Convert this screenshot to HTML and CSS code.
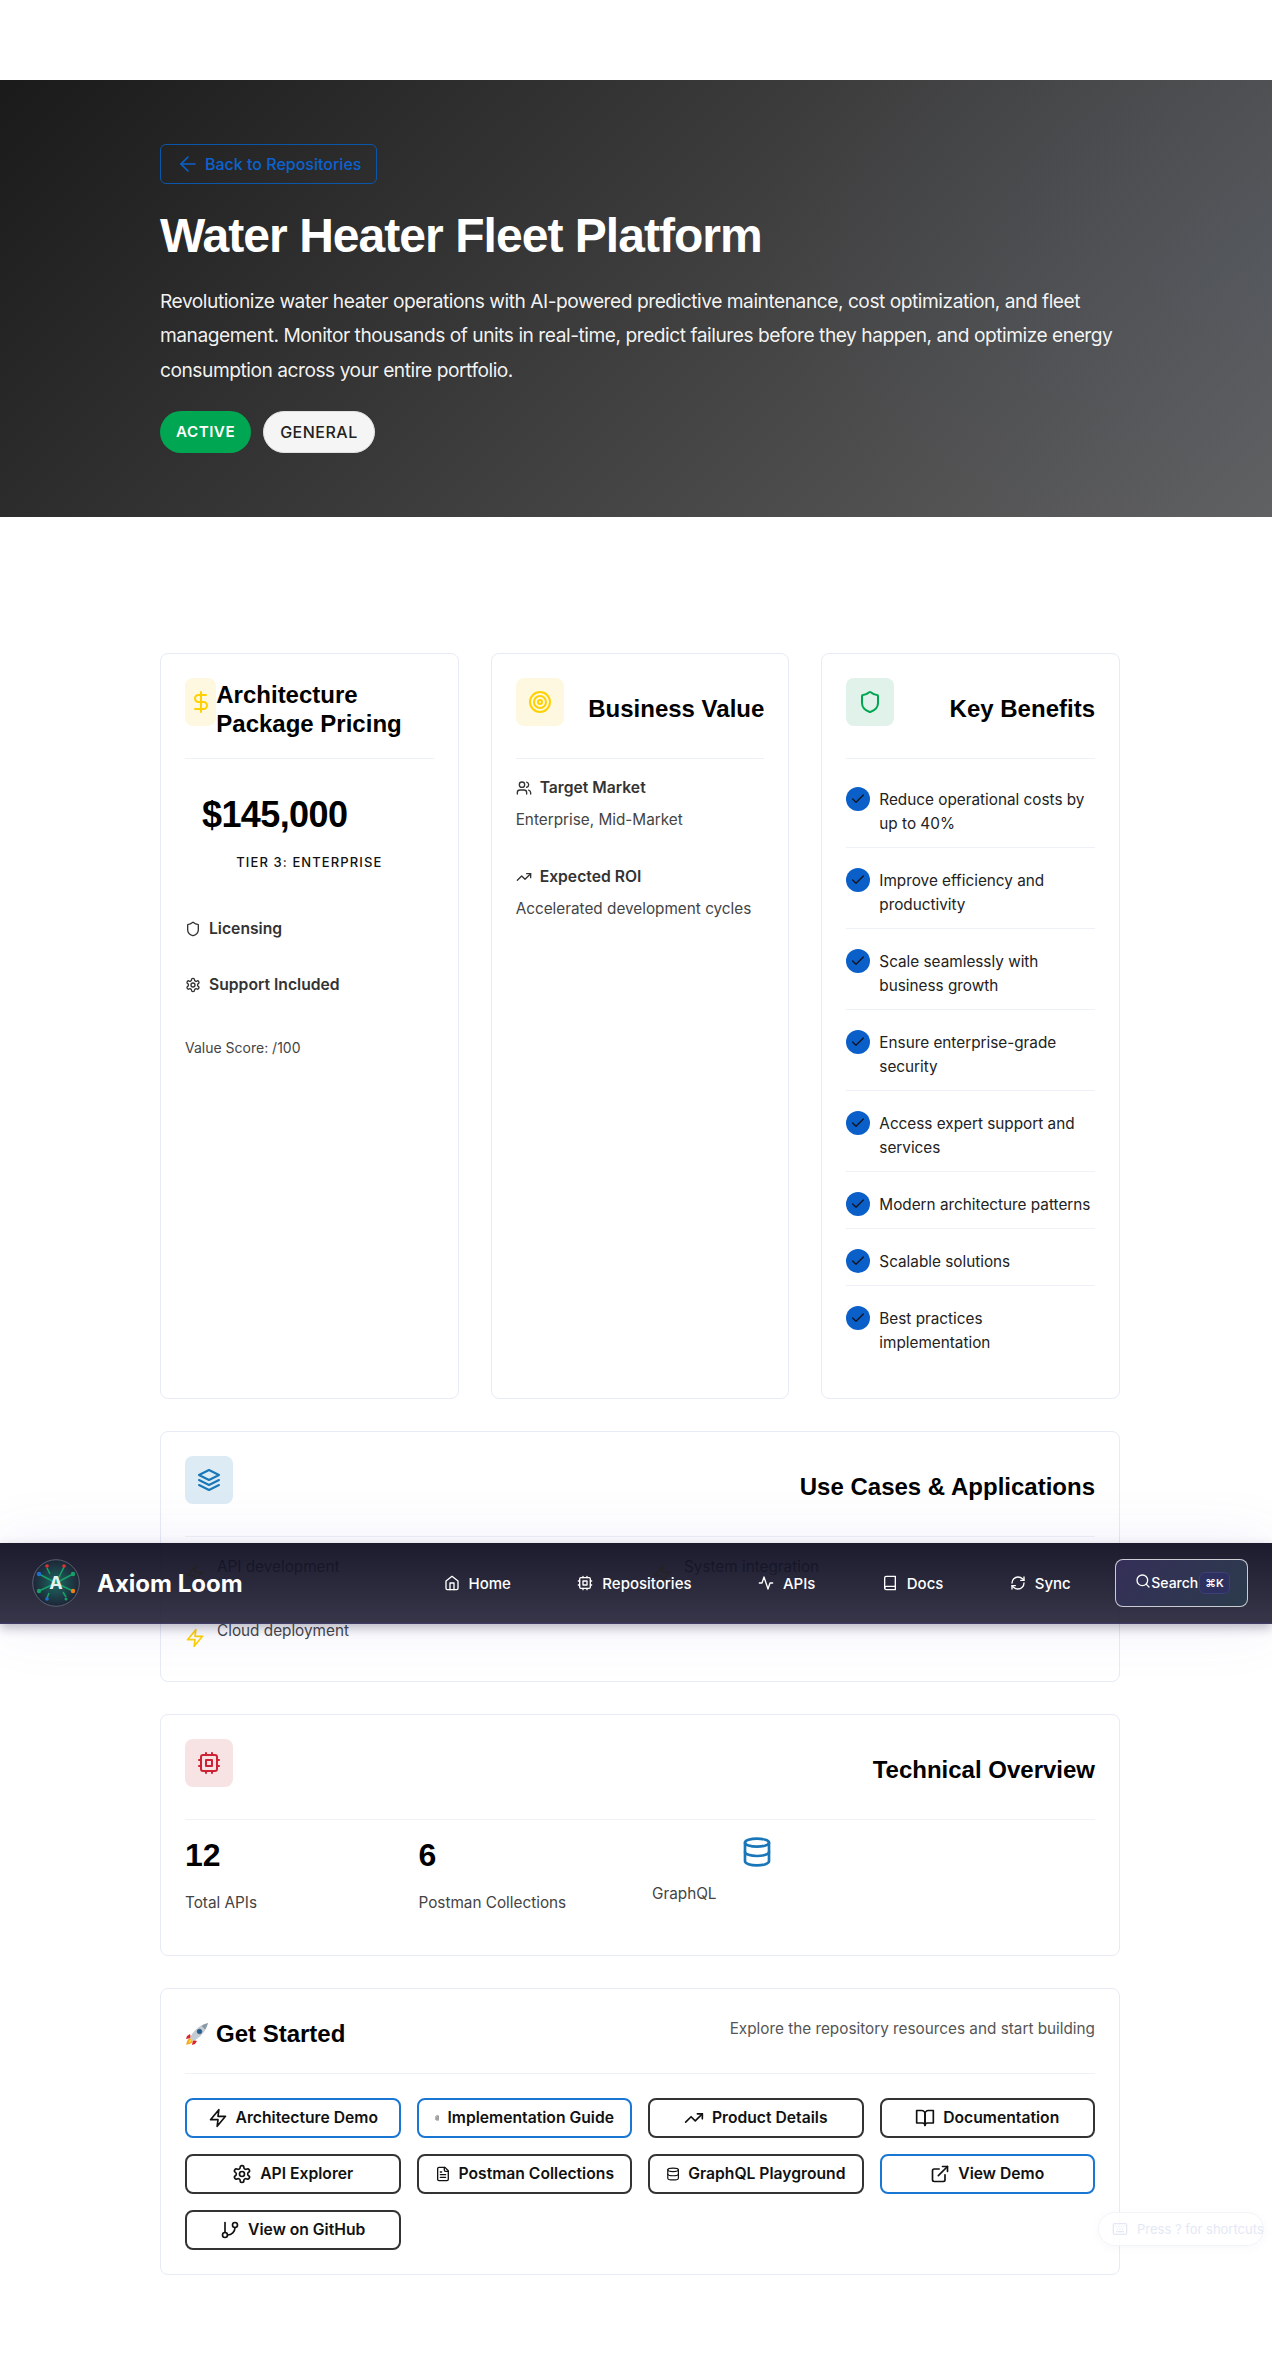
FILE: index.html
```html
<!DOCTYPE html>
<html lang="en">
<head>
  <meta charset="UTF-8" />
  <meta name="viewport" content="width=device-width, initial-scale=1.0"/>
  <title>Water Heater Fleet Platform</title>
  <link rel="stylesheet" href="styles.css">
</head>
<body>
  <svg class="sprite" aria-hidden="true">
    <symbol id="i-arrow-left" viewBox="0 0 24 24"><path d="m12 19-7-7 7-7"/><path d="M19 12H5"/></symbol>
    <symbol id="i-dollar" viewBox="0 0 24 24"><path d="M12 2v20"/><path d="M17 5H9.5a3.5 3.5 0 0 0 0 7h5a3.5 3.5 0 0 1 0 7H6"/></symbol>
    <symbol id="i-target" viewBox="0 0 24 24"><circle cx="12" cy="12" r="10"/><circle cx="12" cy="12" r="6"/><circle cx="12" cy="12" r="2"/></symbol>
    <symbol id="i-shield" viewBox="0 0 24 24"><path d="M20 13c0 5-3.5 7.5-7.66 8.95a1 1 0 0 1-.67-.01C7.5 20.5 4 18 4 13V6a1 1 0 0 1 1-1c2 0 4.5-1.2 6.24-2.72a1.17 1.17 0 0 1 1.52 0C14.51 3.81 17 5 19 5a1 1 0 0 1 1 1z"/></symbol>
    <symbol id="i-settings" viewBox="0 0 24 24"><path d="M12.22 2h-.44a2 2 0 0 0-2 2v.18a2 2 0 0 1-1 1.73l-.43.25a2 2 0 0 1-2 0l-.15-.08a2 2 0 0 0-2.73.73l-.22.38a2 2 0 0 0 .73 2.73l.15.1a2 2 0 0 1 1 1.72v.51a2 2 0 0 1-1 1.74l-.15.09a2 2 0 0 0-.73 2.73l.22.38a2 2 0 0 0 2.73.73l.15-.08a2 2 0 0 1 2 0l.43.25a2 2 0 0 1 1 1.73V20a2 2 0 0 0 2 2h.44a2 2 0 0 0 2-2v-.18a2 2 0 0 1 1-1.73l.43-.25a2 2 0 0 1 2 0l.15.08a2 2 0 0 0 2.73-.73l.22-.39a2 2 0 0 0-.73-2.73l-.15-.08a2 2 0 0 1-1-1.74v-.5a2 2 0 0 1 1-1.74l.15-.09a2 2 0 0 0 .73-2.73l-.22-.38a2 2 0 0 0-2.73-.73l-.15.08a2 2 0 0 1-2 0l-.43-.25a2 2 0 0 1-1-1.73V4a2 2 0 0 0-2-2z"/><circle cx="12" cy="12" r="3"/></symbol>
    <symbol id="i-users" viewBox="0 0 24 24"><path d="M16 21v-2a4 4 0 0 0-4-4H6a4 4 0 0 0-4 4v2"/><circle cx="9" cy="7" r="4"/><path d="M22 21v-2a4 4 0 0 0-3-3.87"/><path d="M16 3.13a4 4 0 0 1 0 7.75"/></symbol>
    <symbol id="i-trending" viewBox="0 0 24 24"><polyline points="22 7 13.5 15.5 8.5 10.5 2 17"/><polyline points="16 7 22 7 22 13"/></symbol>
    <symbol id="i-check" viewBox="0 0 24 24"><path d="M20 6 9 17l-5-5"/></symbol>
    <symbol id="i-layers" viewBox="0 0 24 24"><path d="M12 2 2 7l10 5 10-5-10-5z"/><path d="m2 17 10 5 10-5"/><path d="m2 12 10 5 10-5"/></symbol>
    <symbol id="i-zap" viewBox="0 0 24 24"><polygon points="13 2 3 14 12 14 11 22 21 10 12 10 13 2"/></symbol>
    <symbol id="i-cpu" viewBox="0 0 24 24"><rect x="4" y="4" width="16" height="16" rx="2"/><rect x="9" y="9" width="6" height="6"/><path d="M15 2v2M15 20v2M2 15h2M2 9h2M20 15h2M20 9h2M9 2v2M9 20v2"/></symbol>
    <symbol id="i-database" viewBox="0 0 24 24"><ellipse cx="12" cy="5" rx="9" ry="3"/><path d="M3 5V19A9 3 0 0 0 21 19V5"/><path d="M3 12A9 3 0 0 0 21 12"/></symbol>
    <symbol id="i-file" viewBox="0 0 24 24"><path d="M15 2H6a2 2 0 0 0-2 2v16a2 2 0 0 0 2 2h12a2 2 0 0 0 2-2V7Z"/><path d="M14 2v4a2 2 0 0 0 2 2h4"/><path d="M10 9H8M16 13H8M16 17H8"/></symbol>
    <symbol id="i-book-open" viewBox="0 0 24 24"><path d="M2 3h6a4 4 0 0 1 4 4v14a3 3 0 0 0-3-3H2z"/><path d="M22 3h-6a4 4 0 0 0-4 4v14a3 3 0 0 1 3-3h7z"/></symbol>
    <symbol id="i-external" viewBox="0 0 24 24"><path d="M15 3h6v6"/><path d="M10 14 21 3"/><path d="M18 13v6a2 2 0 0 1-2 2H5a2 2 0 0 1-2-2V8a2 2 0 0 1 2-2h6"/></symbol>
    <symbol id="i-branch" viewBox="0 0 24 24"><path d="M6 3v12"/><circle cx="18" cy="6" r="3"/><circle cx="6" cy="18" r="3"/><path d="M18 9a9 9 0 0 1-9 9"/></symbol>
    <symbol id="i-home" viewBox="0 0 24 24"><path d="m3 9 9-7 9 7v11a2 2 0 0 1-2 2H5a2 2 0 0 1-2-2z"/><polyline points="9 22 9 12 15 12 15 22"/></symbol>
    <symbol id="i-activity" viewBox="0 0 24 24"><polyline points="22 12 18 12 15 21 9 3 6 12 2 12"/></symbol>
    <symbol id="i-book" viewBox="0 0 24 24"><path d="M4 19.5A2.5 2.5 0 0 1 6.5 17H20"/><path d="M6.5 2H20v20H6.5A2.5 2.5 0 0 1 4 19.5v-15A2.5 2.5 0 0 1 6.5 2z"/></symbol>
    <symbol id="i-sync" viewBox="0 0 24 24"><path d="M3 12a9 9 0 0 1 9-9 9.75 9.75 0 0 1 6.74 2.74L21 8"/><path d="M21 3v5h-5"/><path d="M21 12a9 9 0 0 1-9 9 9.75 9.75 0 0 1-6.74-2.74L3 16"/><path d="M8 16H3v5"/></symbol>
    <symbol id="i-search" viewBox="0 0 24 24"><circle cx="11" cy="11" r="8"/><path d="m21 21-4.3-4.3"/></symbol>
    <symbol id="i-keyboard" viewBox="0 0 24 24"><rect x="2" y="4" width="20" height="16" rx="2"/><path d="M6 8h.01M10 8h.01M14 8h.01M18 8h.01M8 12h.01M12 12h.01M16 12h.01M7 16h10"/></symbol>
  </svg>

  <section class="hero">
    <div class="hero-inner">
      <a class="back-link" href="#"><svg class="icon icon-24"><use href="#i-arrow-left"/></svg>Back to Repositories</a>
      <h1>Water Heater Fleet Platform</h1>
      <p class="hero-text">Revolutionize water heater operations with AI-powered predictive maintenance, cost optimization, and fleet management. Monitor thousands of units in real-time, predict failures before they happen, and optimize energy consumption across your entire portfolio.</p>
      <div class="badges">
        <span class="badge badge-active">ACTIVE</span>
        <span class="badge badge-general">GENERAL</span>
      </div>
    </div>
  </section>

  <main class="container">
    <div class="three-cols">
      <div class="card">
        <div class="card-header">
          <div class="card-icon yellow"><svg class="icon icon-24"><use href="#i-dollar"/></svg></div>
          <h3>Architecture Package Pricing</h3>
        </div>
        <div class="price">$145,000</div>
        <div class="tier">TIER 3: ENTERPRISE</div>
        <div class="label-row licensing"><svg class="icon icon-16"><use href="#i-shield"/></svg>Licensing</div>
        <div class="label-row support"><svg class="icon icon-16"><use href="#i-settings"/></svg>Support Included</div>
        <p class="score">Value Score: /100</p>
      </div>

      <div class="card">
        <div class="card-header">
          <div class="card-icon yellow"><svg class="icon icon-24"><use href="#i-target"/></svg></div>
          <h3>Business Value</h3>
        </div>
        <div class="value-block">
          <div class="label-row"><svg class="icon icon-16"><use href="#i-users"/></svg>Target Market</div>
          <p>Enterprise, Mid-Market</p>
        </div>
        <div class="value-block">
          <div class="label-row"><svg class="icon icon-16"><use href="#i-trending"/></svg>Expected ROI</div>
          <p>Accelerated development cycles</p>
        </div>
      </div>

      <div class="card">
        <div class="card-header">
          <div class="card-icon green"><svg class="icon icon-24"><use href="#i-shield"/></svg></div>
          <h3>Key Benefits</h3>
        </div>
        <ul class="benefits">
          <li><span class="check"><svg class="icon icon-16"><use href="#i-check"/></svg></span>Reduce operational costs by up to 40%</li>
          <li><span class="check"><svg class="icon icon-16"><use href="#i-check"/></svg></span>Improve efficiency and productivity</li>
          <li><span class="check"><svg class="icon icon-16"><use href="#i-check"/></svg></span>Scale seamlessly with business growth</li>
          <li><span class="check"><svg class="icon icon-16"><use href="#i-check"/></svg></span>Ensure enterprise-grade security</li>
          <li><span class="check"><svg class="icon icon-16"><use href="#i-check"/></svg></span>Access expert support and services</li>
          <li><span class="check"><svg class="icon icon-16"><use href="#i-check"/></svg></span>Modern architecture patterns</li>
          <li><span class="check"><svg class="icon icon-16"><use href="#i-check"/></svg></span>Scalable solutions</li>
          <li><span class="check"><svg class="icon icon-16"><use href="#i-check"/></svg></span>Best practices implementation</li>
        </ul>
      </div>
    </div>

    <div class="card">
      <div class="card-header">
        <div class="card-icon blue"><svg class="icon icon-24"><use href="#i-layers"/></svg></div>
        <h3>Use Cases &amp; Applications</h3>
      </div>
      <div class="use-cases">
        <div class="use-case"><svg class="icon icon-20"><use href="#i-zap"/></svg><p>API development</p></div>
        <div class="use-case"><svg class="icon icon-20"><use href="#i-zap"/></svg><p>System integration</p></div>
        <div class="use-case"><svg class="icon icon-20"><use href="#i-zap"/></svg><p>Cloud deployment</p></div>
      </div>
    </div>

    <div class="card">
      <div class="card-header">
        <div class="card-icon red"><svg class="icon icon-24"><use href="#i-cpu"/></svg></div>
        <h3>Technical Overview</h3>
      </div>
      <div class="stats">
        <div class="stat">
          <div class="stat-num">12</div>
          <p>Total APIs</p>
        </div>
        <div class="stat">
          <div class="stat-num">6</div>
          <p>Postman Collections</p>
        </div>
        <div class="stat stat-graphql">
          <svg class="icon icon-32"><use href="#i-database"/></svg>
          <p>GraphQL</p>
        </div>
      </div>
    </div>

    <div class="card">
      <div class="card-header start-header">
        <h3>
          <svg class="rocket" viewBox="0 0 24 24" aria-hidden="true">
            <path d="M5 12 2 14l-1 3 5-1z" fill="#d8262c"/>
            <path d="M12 19l-2 3-3 1 1-5z" fill="#d8262c"/>
            <path d="M5 16c-2 1-3.500 3.500-3.800 6.800C4.500 22.500 7 21 8 19z" fill="#f9a51a"/>
            <path d="M5.500 17.500c-1 .8-1.800 2-2 3.300 1.300-.2 2.500-1 3.300-2z" fill="#ffe14d"/>
            <path d="M5 16 8 19C13 17 20 12 23 1 12 4 7 11 5 16z" fill="#c3ccd5"/>
            <path d="M23 1c-2.500.7-4.600 1.700-6.500 2.900L20.100 7.500C21.300 5.600 22.300 3.500 23 1z" fill="#8a99a8"/>
            <circle cx="14.500" cy="9.500" r="2.300" fill="#1f5f99" stroke="#4a5a68" stroke-width=".8"/>
          </svg>
          Get Started
        </h3>
        <p>Explore the repository resources and start building</p>
      </div>
      <div class="actions">
        <a class="btn btn-blue" href="#"><svg class="icon"><use href="#i-zap"/></svg><span>Architecture Demo</span></a>
        <a class="btn btn-blue" href="#"><svg class="icon"><use href="#i-file"/></svg><span>Implementation Guide</span></a>
        <a class="btn" href="#"><svg class="icon"><use href="#i-trending"/></svg><span>Product Details</span></a>
        <a class="btn" href="#"><svg class="icon"><use href="#i-book-open"/></svg><span>Documentation</span></a>
        <a class="btn" href="#"><svg class="icon"><use href="#i-settings"/></svg><span>API Explorer</span></a>
        <a class="btn" href="#"><svg class="icon"><use href="#i-file"/></svg><span>Postman Collections</span></a>
        <a class="btn" href="#"><svg class="icon"><use href="#i-database"/></svg><span>GraphQL Playground</span></a>
        <a class="btn btn-blue" href="#"><svg class="icon"><use href="#i-external"/></svg><span>View Demo</span></a>
        <a class="btn" href="#"><svg class="icon"><use href="#i-branch"/></svg><span>View on GitHub</span></a>
      </div>
    </div>
  </main>

  <!-- sticky bar, caught mid page by the screenshot -->
  <nav class="navbar">
    <a class="brand" href="#">
      <svg class="logo" viewBox="0 0 48 48" aria-hidden="true">
        <defs>
          <radialGradient id="logoBg">
            <stop offset="0" stop-color="#1c6a62"/>
            <stop offset="1" stop-color="#1e2436"/>
          </radialGradient>
        </defs>
        <circle cx="24" cy="24" r="23.300" fill="url(#logoBg)" stroke="#5a6070" stroke-width="1"/>
        <g stroke="#16a067" stroke-width="1.600">
          <path d="M24 24 7 15M24 24 7 32M24 24 41 15M24 24 41 32M24 24 32 8M15 9l3 6M34 38l-3-5M15 39l2-5"/>
        </g>
        <circle cx="7" cy="15" r="2.200" fill="#1f6fd1"/>
        <circle cx="7" cy="32" r="2.200" fill="#16a067"/>
        <circle cx="41" cy="15" r="2.200" fill="#16a067"/>
        <circle cx="41" cy="32" r="2.200" fill="#f07c1a"/>
        <circle cx="32" cy="7" r="1.800" fill="#d33"/>
        <circle cx="15" cy="7" r="1.800" fill="#d33"/>
        <circle cx="34" cy="40" r="1.500" fill="#16a067"/>
        <circle cx="15" cy="40" r="1.800" fill="#1f6fd1"/>
        <text x="24" y="30" class="logo-letter" text-anchor="middle">A</text>
      </svg>
      <span>Axiom Loom</span>
    </a>
    <div class="nav-links">
      <a href="#"><svg class="icon icon-16"><use href="#i-home"/></svg>Home</a>
      <a href="#"><svg class="icon icon-16"><use href="#i-cpu"/></svg>Repositories</a>
      <a href="#"><svg class="icon icon-16"><use href="#i-activity"/></svg>APIs</a>
      <a href="#"><svg class="icon icon-16"><use href="#i-book"/></svg>Docs</a>
      <a href="#"><svg class="icon icon-16"><use href="#i-sync"/></svg>Sync</a>
    </div>
    <button class="search-btn" type="button">
      <svg class="icon icon-16"><use href="#i-search"/></svg>
      <span>Search</span>
      <kbd>⌘K</kbd>
    </button>
  </nav>

  <div class="shortcut-hint"><svg class="icon icon-16"><use href="#i-keyboard"/></svg>Press ? for shortcuts</div>
</body>
</html>
```

FILE: styles.css
```css
* {
  box-sizing: border-box;
}

body {
  margin: 0;
  padding-top: 80px;
  position: relative;
  height: 2371px;
  overflow: hidden;
  font-family: Inter, "Liberation Sans", sans-serif;
  color: #000;
  background: #fff;
}

a {
  color: inherit;
  text-decoration: none;
}

.sprite {
  position: absolute;
  width: 0;
  height: 0;
}

.icon {
  fill: none;
  stroke: currentColor;
  stroke-width: 2;
  stroke-linecap: round;
  stroke-linejoin: round;
  flex-shrink: 0;
}

.icon-16 { width: 16px; height: 16px; }
.icon-20 { width: 20px; height: 20px; }
.icon-24 { width: 24px; height: 24px; }
.icon-32 { width: 32px; height: 32px; }

/* hero */
.hero {
  padding: 64px 0;
  background:
    radial-gradient(ellipse 520px 360px at 100% 42%, rgba(80, 95, 120, 0.2), rgba(80, 95, 120, 0)),
    linear-gradient(135deg, #1a1a1a 0%, #444 60%, #616161 100%);
  color: #fff;
}

.hero-inner {
  width: 960px;
  margin-left: 160px;
}

.back-link {
  display: inline-flex;
  align-items: center;
  gap: 5px;
  height: 40px;
  padding: 0 15px;
  border: 1px solid #0a56ad;
  border-radius: 6px;
  color: #0b62cf;
  font-size: 16px;
  font-weight: 500;
}

.back-link .icon {
  stroke-width: 1.600;
}

.hero h1 {
  margin: 23px 0 18.500px;
  font-family: "Liberation Sans", Arial, sans-serif;
  font-size: 48px;
  line-height: 58px;
  font-weight: 700;
  letter-spacing: -0.96px;
}

.hero-text {
  margin: 0 0 23.500px;
  font-size: 19.200px;
  line-height: 34.560px;
  letter-spacing: -0.48px;
  color: rgba(255, 255, 255, 0.95);
}

.badges {
  display: flex;
  gap: 12px;
}

.badge {
  display: flex;
  align-items: center;
  height: 42px;
  padding: 0 16px;
  border-radius: 21px;
  font-size: 15.200px;
  letter-spacing: 0.5px;
}

.badge-active {
  background: #00a651;
  color: #fff;
  font-weight: 600;
}

.badge-general {
  background: #f5f5f5;
  color: #222;
  font-size: 16px;
  font-weight: 500;
  border: 1px solid #e0e0e0;
}

/* cards */
.container {
  width: 960px;
  margin: 136px 0 0 160px;
  display: flex;
  flex-direction: column;
  gap: 32px;
}

.three-cols {
  display: grid;
  grid-template-columns: repeat(3, 1fr);
  gap: 32px;
  height: 746px;
}

.card {
  border: 1px solid #e6ebf5;
  border-radius: 8px;
  padding: 24px;
  background: #fff;
}

.card-header {
  display: flex;
  justify-content: space-between;
  align-items: center;
  padding-bottom: 16px;
  margin-bottom: 16px;
  border-bottom: 1px solid #eef1f8;
}

.card-header h3 {
  margin: 0 0 2px;
  font-family: "Liberation Sans", Arial, sans-serif;
  font-size: 24px;
  line-height: 29px;
  font-weight: 700;
}

.card-icon {
  display: flex;
  align-items: center;
  justify-content: center;
  width: 48px;
  height: 48px;
  margin-bottom: 16px;
  border-radius: 8px;
}

.yellow { background: #fff8e1; color: #ffd100; }
.green { background: #e0f2e9; color: #00a651; }
.blue { background: #dcebf4; color: #1976b8; }
.red { background: #f8e3e4; color: #cc2233; }

.price {
  padding: 0 17px;
  margin-top: 34px;
  font-family: "Liberation Sans", Arial, sans-serif;
  font-size: 36px;
  line-height: 44px;
  font-weight: 700;
  letter-spacing: -0.6px;
}

.tier {
  margin-top: 15px;
  text-align: center;
  font-size: 13px;
  line-height: 20px;
  font-weight: 500;
  letter-spacing: 1.1px;
  color: #111;
}

.label-row {
  display: flex;
  align-items: center;
  gap: 8px;
  font-size: 15.700px;
  line-height: 24px;
  font-weight: 600;
  color: #333;
}

.licensing { margin-top: 45px; }
.support { margin-top: 32px; }

.score {
  margin: 40px 0 0;
  font-size: 14px;
  line-height: 22px;
  color: #444;
}

.value-block {
  padding-top: 1px;
  margin-bottom: 31.500px;
}

.value-block p {
  margin: 8.500px 0 0;
  font-size: 15.300px;
  line-height: 24px;
  color: #444;
}

.benefits {
  list-style: none;
  margin: 0;
  padding: 0;
}

.benefits li {
  display: flex;
  gap: 9px;
  padding: 13px 0 11px;
  margin-bottom: 8px;
  border-bottom: 1px solid #eef1f8;
  font-size: 15.300px;
  line-height: 24px;
  color: #222;
}

.benefits li:last-child {
  border-bottom: none;
}

.check {
  display: flex;
  align-items: center;
  justify-content: center;
  flex-shrink: 0;
  width: 24px;
  height: 24px;
  margin-top: -1px;
  border-radius: 50%;
  background: #0a5fc8;
  color: #14141f;
}

.use-cases {
  display: grid;
  grid-template-columns: 1fr 1fr;
  gap: 25.500px 24px;
  margin-top: 18.500px;
}

.use-case {
  display: flex;
  align-items: center;
  gap: 12px;
  color: #ffd100;
}

.use-case p {
  margin: 0 0 14px;
  font-size: 15.300px;
  line-height: 24px;
  color: #444;
}

.stats {
  display: grid;
  grid-template-columns: repeat(4, 1fr);
  gap: 24px;
}

.stat-num {
  font-family: "Liberation Sans", Arial, sans-serif;
  font-size: 32px;
  line-height: 38px;
  font-weight: 700;
}

.stat p {
  margin: 17px 0 16px;
  font-size: 15.300px;
  line-height: 24px;
  color: #444;
}

.stat-graphql .icon {
  display: block;
  margin: 0 auto;
  color: #1976b8;
}

.stat-graphql p {
  margin-top: 14px;
}

.start-header {
  height: 61px;
  margin-bottom: 24px;
}

.start-header h3 {
  display: flex;
  align-items: center;
  gap: 7px;
}

.start-header p {
  margin: 0 0 12px;
  font-size: 15.300px;
  line-height: 24px;
  color: #555;
}

.rocket {
  width: 24px;
  height: 24px;
}

.actions {
  display: grid;
  grid-template-columns: repeat(4, minmax(0, 1fr));
  gap: 16px;
}

.btn {
  display: flex;
  align-items: center;
  justify-content: center;
  gap: 8px;
  height: 40px;
  padding: 0 16px;
  border: 2px solid #333;
  border-radius: 8px;
  font-size: 15.700px;
  font-weight: 600;
  color: #111;
  white-space: nowrap;
}

.btn .icon {
  width: 20px;
  height: 20px;
  flex-shrink: 1;
  min-width: 0;
}

.btn-blue {
  border-color: #1976d2;
}

/* navbar overlay */
.navbar {
  position: absolute;
  top: 1543px;
  left: 0;
  right: 0;
  height: 81px;
  display: flex;
  align-items: center;
  padding: 0 24px 0 32px;
  background: linear-gradient(180deg, rgba(10, 10, 29, 0.93), rgba(40, 39, 60, 0.93));
  border-bottom: 1px solid rgba(92, 80, 140, 0.6);
  box-shadow: 0 4px 10px rgba(40, 40, 70, 0.3), 0 0 60px rgba(110, 90, 200, 0.1);
  color: #fff;
}

.brand {
  display: flex;
  align-items: center;
  gap: 17px;
  font-size: 24px;
  font-weight: 700;
}

.logo {
  width: 48px;
  height: 48px;
}

.logo-letter {
  fill: #e8f0f0;
  font-size: 18px;
  font-weight: 700;
}

.nav-links {
  display: flex;
  gap: 66.400px;
  margin-left: 201px;
  font-size: 15px;
  font-weight: 500;
}

.nav-links a {
  display: flex;
  align-items: center;
  gap: 9px;
}

.search-btn {
  display: flex;
  align-items: center;
  justify-content: center;
  width: 133px;
  height: 48px;
  margin-left: auto;
  padding: 0 0 0 2px;
  border: 1px solid rgba(255, 255, 255, 0.75);
  border-radius: 8px;
  background: linear-gradient(135deg, #352f58, #2b3b4c);
  color: #fff;
  font-family: inherit;
  font-size: 14px;
  font-weight: 500;
}

.search-btn .icon {
  margin-bottom: 5px;
}

.search-btn span {
  margin: 0 1px 2px 0;
}

.search-btn kbd {
  padding: 3px 5px;
  border: 1px solid #3c3f78;
  border-radius: 6px;
  background: #2e3060;
  font-family: inherit;
  font-size: 11px;
  font-weight: 600;
}

.shortcut-hint {
  position: absolute;
  top: 2212px;
  right: 8px;
  display: flex;
  align-items: center;
  gap: 9px;
  width: 166px;
  height: 34px;
  padding-left: 13px;
  border: 1px solid #f2f4fa;
  border-radius: 17px;
  background: rgba(255, 255, 255, 0.85);
  box-shadow: 0 2px 8px rgba(100, 110, 160, 0.05);
  color: #e4e8f5;
  font-size: 13px;
  white-space: nowrap;
}
```
